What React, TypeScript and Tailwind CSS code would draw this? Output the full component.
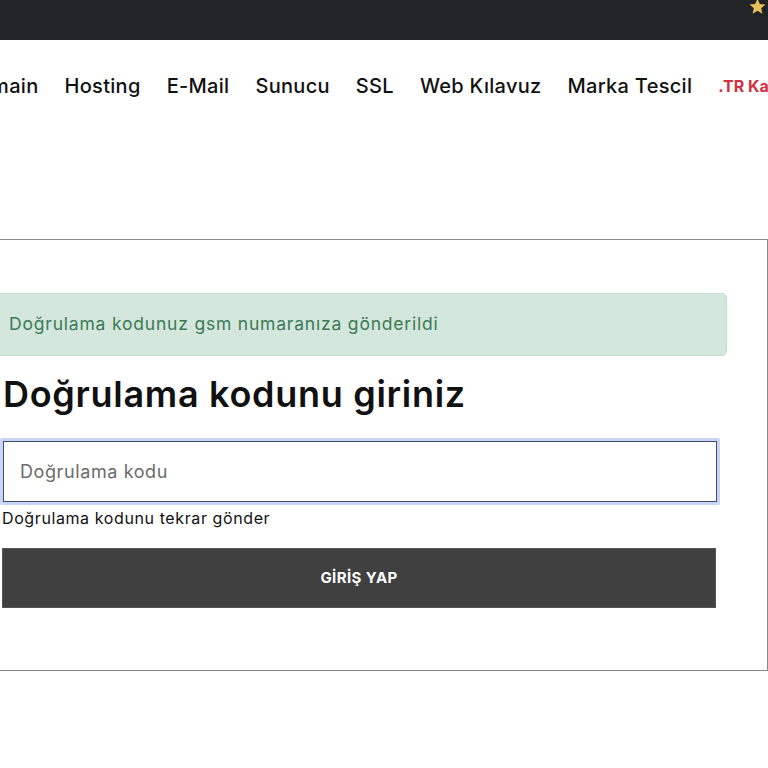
import React from "react";

export default function App() {
  const nav = ["Domain", "Hosting", "E-Mail", "Sunucu", "SSL", "Web Kılavuz", "Marka Tescil"];
  return (
    <div className="w-[768px] h-[768px] overflow-hidden bg-white" style={{ fontFamily: "Inter, 'Noto Sans', sans-serif" }}>
      <div className="h-[40px] bg-[#222428] relative">
        <svg className="absolute left-[748px] top-[-3px]" width="19" height="19" viewBox="0 0 24 24">
          <path d="M12 2l2.9 6.9 7.1.6-5.4 4.7 1.6 7-6.2-3.8-6.2 3.8 1.6-7L2 9.5l7.1-.6z" fill="#e8c15a" />
        </svg>
      </div>
      <div className="h-[200px] border-b border-[#8a8a8a] pt-[31px]">
        <div className="flex items-center gap-[26px] whitespace-nowrap ml-[-36px] text-[20px] tracking-[0.3px] font-medium text-[#111]">
          {nav.map((n) => (
            <span key={n}>{n}</span>
          ))}
          <span className="text-[#d0323f] font-bold text-[16px] tracking-normal">.TR Kampanya</span>
        </div>
      </div>
      <div className="h-[431px] border-r border-b border-[#8a8a8a] ml-[-30px] pl-[32px] pr-[51px] pt-[53px]">
        <div className="h-[63px] rounded-[5px] bg-[#d4e7dd] border border-[#c2dccd] flex items-center text-[#3b7a55] text-[17.5px] tracking-[0.8px] ml-[-30px] mr-[-11px] pl-[36px]">
          Doğrulama kodunuz gsm numaranıza gönderildi
        </div>
        <h1 className="mt-[16px] text-[36px] tracking-[0.7px] font-semibold text-[#111] leading-[44px] ml-[1px]">Doğrulama kodunu giriniz</h1>
        <div className="mt-[22px] w-[720px] ml-[-2px] rounded-[2px] p-[3px] bg-[#c9d5f7]">
          <div className="h-[61px] border border-[#3f4a6a] bg-white flex items-center pl-[16px] text-[18px] tracking-[0.6px] text-[#6b6b6b]">
            Doğrulama kodu
          </div>
        </div>
        <div className="mt-[1px] text-[16px] tracking-[0.6px] text-[#111]">Doğrulama kodunu tekrar gönder</div>
        <div className="mt-[18px] w-[714px] h-[60px] bg-[#404040] border border-[#555] flex items-center justify-center text-white font-bold text-[15px] tracking-[0.4px]">
          GİRİŞ YAP
        </div>
      </div>
    </div>
  );
}
